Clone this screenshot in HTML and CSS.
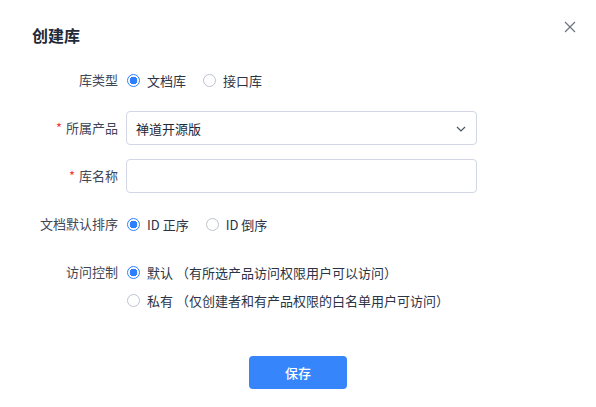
FILE: index.html
```html
<!DOCTYPE html>
<html lang="zh-CN">
<head>
<meta charset="utf-8">
<link rel="stylesheet" href="styles.css">
</head>
<body>
<div class="dialog">
  <div class="header">
    <h1 class="title">创建库</h1>
    <button class="close" aria-label="关闭">
      <svg width="12" height="12" viewBox="0 0 12 12"><path d="M1 1L11 11M11 1L1 11" stroke="#6b7280" stroke-width="1.2" fill="none"/></svg>
    </button>
  </div>
  <form class="form">
    <div class="row">
      <div class="label">库类型</div>
      <div class="control options">
        <label class="opt"><span class="radio checked"></span>文档库</label>
        <label class="opt"><span class="radio"></span>接口库</label>
      </div>
    </div>
    <div class="row">
      <div class="label"><span class="req">*</span>所属产品</div>
      <div class="control">
        <div class="select">
          <span>禅道开源版</span>
          <svg class="chev" width="10" height="6" viewBox="0 0 10 6"><path d="M1 1L5 5L9 1" stroke="#4b5563" stroke-width="1.2" fill="none"/></svg>
        </div>
      </div>
    </div>
    <div class="row">
      <div class="label"><span class="req">*</span>库名称</div>
      <div class="control">
        <div class="input"></div>
      </div>
    </div>
    <div class="row">
      <div class="label">文档默认排序</div>
      <div class="control options">
        <label class="opt"><span class="radio checked"></span>ID 正序</label>
        <label class="opt"><span class="radio"></span>ID 倒序</label>
      </div>
    </div>
    <div class="row">
      <div class="label">访问控制</div>
      <div class="control stack">
        <label class="opt"><span class="radio checked"></span>默认 （有所选产品访问权限用户可以访问）</label>
        <label class="opt"><span class="radio"></span>私有 （仅创建者和有产品权限的白名单用户可访问）</label>
      </div>
    </div>
    <div class="footer">
      <button type="button" class="btn">保存</button>
    </div>
  </form>
</div>
</body>
</html>
```
FILE: styles.css
```css
* { box-sizing: border-box; }
html, body { margin: 0; padding: 0; background: #fff; }
body {
  font-family: "Noto Sans CJK SC", "Noto Sans", sans-serif;
  font-size: 13px;
  color: #313c52;
  width: 596px;
  height: 407px;
  overflow: hidden;
}
.dialog { padding: 0 20px 0 32px; }
.header {
  display: flex;
  justify-content: space-between;
  align-items: flex-start;
  height: 63px;
}
.title {
  margin: 24px 0 0;
  font-size: 16px;
  font-weight: 700;
  color: #1f2937;
  line-height: 22px;
}
.close {
  border: 0;
  background: none;
  padding: 0;
  margin-top: 21px;
  width: 12px;
  height: 12px;
  display: flex;
}
.form { display: flex; flex-direction: column; gap: 14px; }
.row { display: flex; align-items: flex-start; }
.label {
  width: 86px;
  margin-right: 8px;
  text-align: right;
  height: 34px;
  line-height: 34px;
  color: #3f4656;
  white-space: nowrap;
}
.req { color: #f03d3d; margin-right: 4px; }
.control { width: 351px; }
.options { display: flex; align-items: center; height: 34px; gap: 16px; }
.stack { display: flex; flex-direction: column; gap: 4px; padding-top: 5px; }
.stack .opt { height: 24px; }
.opt { display: flex; align-items: center; gap: 7px; white-space: nowrap; color: #2b3446; }
.radio {
  width: 13px;
  height: 13px;
  border-radius: 50%;
  border: 1px solid #bcc3d0;
  background: #fff;
  flex: none;
  margin-left: 1px;
}
.radio.checked {
  border-color: #2e7fff;
  background: radial-gradient(circle, #2e7fff 0 3.6px, #fff 4.1px);
}
.select, .input {
  height: 34px;
  border: 1px solid #d3d6e4;
  border-radius: 4px;
  background: #fff;
}
.select {
  display: flex;
  align-items: center;
  justify-content: space-between;
  padding: 0 10px 0 9px;
  color: #1f2937;
}
.chev { margin-top: 1px; }
.footer {
  display: flex;
  justify-content: center;
  margin-top: 30px;
  width: 596px;
  margin-left: -32px;
}
.btn {
  width: 98px;
  height: 33px;
  border: 0;
  border-radius: 4px;
  background: #3785fb;
  color: #fff;
  font-family: inherit;
  font-size: 13px;
  font-weight: 500;
}
```
